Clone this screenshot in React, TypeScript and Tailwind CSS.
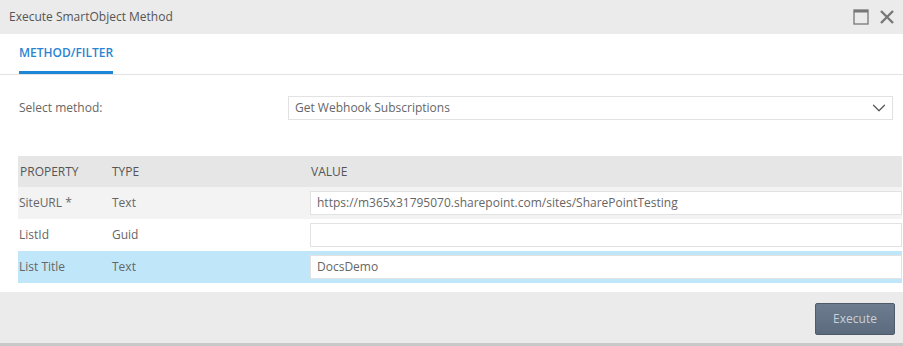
import { ChevronDown } from 'lucide-react'

const rows = [
  { name: 'SiteURL *', type: 'Text', value: 'https://m365x31795070.sharepoint.com/sites/SharePointTesting', bg: 'bg-[#f3f3f3]' },
  { name: 'ListId', type: 'Guid', value: '', bg: 'bg-white' },
  { name: 'List Title', type: 'Text', value: 'DocsDemo', bg: 'bg-[#c0e7f9]' },
]

export default function App() {
  return (
    <div className="flex h-[346px] w-[903px] flex-col bg-white font-['Open_Sans',sans-serif] text-[12px] text-[#666]">
      {/* title bar */}
      <div className="flex h-[34px] shrink-0 items-center justify-between bg-[#ebebeb] pl-[9px] pr-[8px]">
        <span className="text-[12px] text-[#555]">Execute SmartObject Method</span>
        <div className="flex items-center gap-[10px]">
          <svg width="16" height="16" viewBox="0 0 16 16" className="text-[#777]">
            <rect x="1" y="1" width="14" height="14" fill="none" stroke="currentColor" strokeWidth="1.3" />
            <rect x="1" y="1" width="14" height="2.5" fill="currentColor" />
          </svg>
          <svg width="16" height="16" viewBox="0 0 16 16" className="text-[#777]">
            <path d="M2 2L14 14M14 2L2 14" stroke="currentColor" strokeWidth="2.4" />
          </svg>
        </div>
      </div>

      {/* tabs */}
      <div className="flex h-[41px] shrink-0 items-end border-b border-[#e3e3e3] pl-[19px]">
        <div className="border-b-[3px] border-[#1e86d6] pb-[9px] text-[12px] font-semibold text-[#2a84d2]">
          METHOD/FILTER
        </div>
      </div>

      {/* select */}
      <div className="mt-[21px] flex h-[24px] items-center pl-[19px] pr-[10px]">
        <span className="w-[269px] text-[12px] text-[#666]">Select method:</span>
        <div className="flex h-[24px] flex-1 items-center justify-between border border-[#e2e2e2] pl-[6px] pr-[2px]">
          <span>Get Webhook Subscriptions</span>
          <ChevronDown size={22} strokeWidth={1.3} className="text-[#555]" />
        </div>
      </div>

      {/* table */}
      <div className="ml-[18px] mr-[1px] mt-[36px]">
        <div className="flex h-[31px] items-center bg-[#e6e6e6] text-[12px] text-[#555]">
          <span className="w-[79px] pl-[2px]">PROPERTY</span>
          <span className="w-[213px] pl-[15px]">TYPE</span>
          <span className="pl-[1px]">VALUE</span>
        </div>
        {rows.map((r) => (
          <div key={r.name} className={`flex h-[32px] items-center ${r.bg}`}>
            <span className="w-[79px] pl-[1px]">{r.name}</span>
            <span className="w-[213px] pl-[15px]">{r.type}</span>
            <div className="flex h-[24px] flex-1 items-center border border-[#e2e2e2] bg-white pl-[6px]">
              {r.value}
            </div>
          </div>
        ))}
      </div>

      {/* footer */}
      <div className="mt-[9px] flex flex-1 items-center justify-end border-b-[3px] border-[#c8c8c8] bg-[#ebebeb] pr-[8px]">
        <button className="mt-[2px] h-[32px] w-[80px] rounded-[2px] border border-[#4f5b69] bg-gradient-to-b from-[#6d7c8e] to-[#5b6a7d] text-[12px] text-[#c9d0d8]">
          Execute
        </button>
      </div>
    </div>
  )
}
